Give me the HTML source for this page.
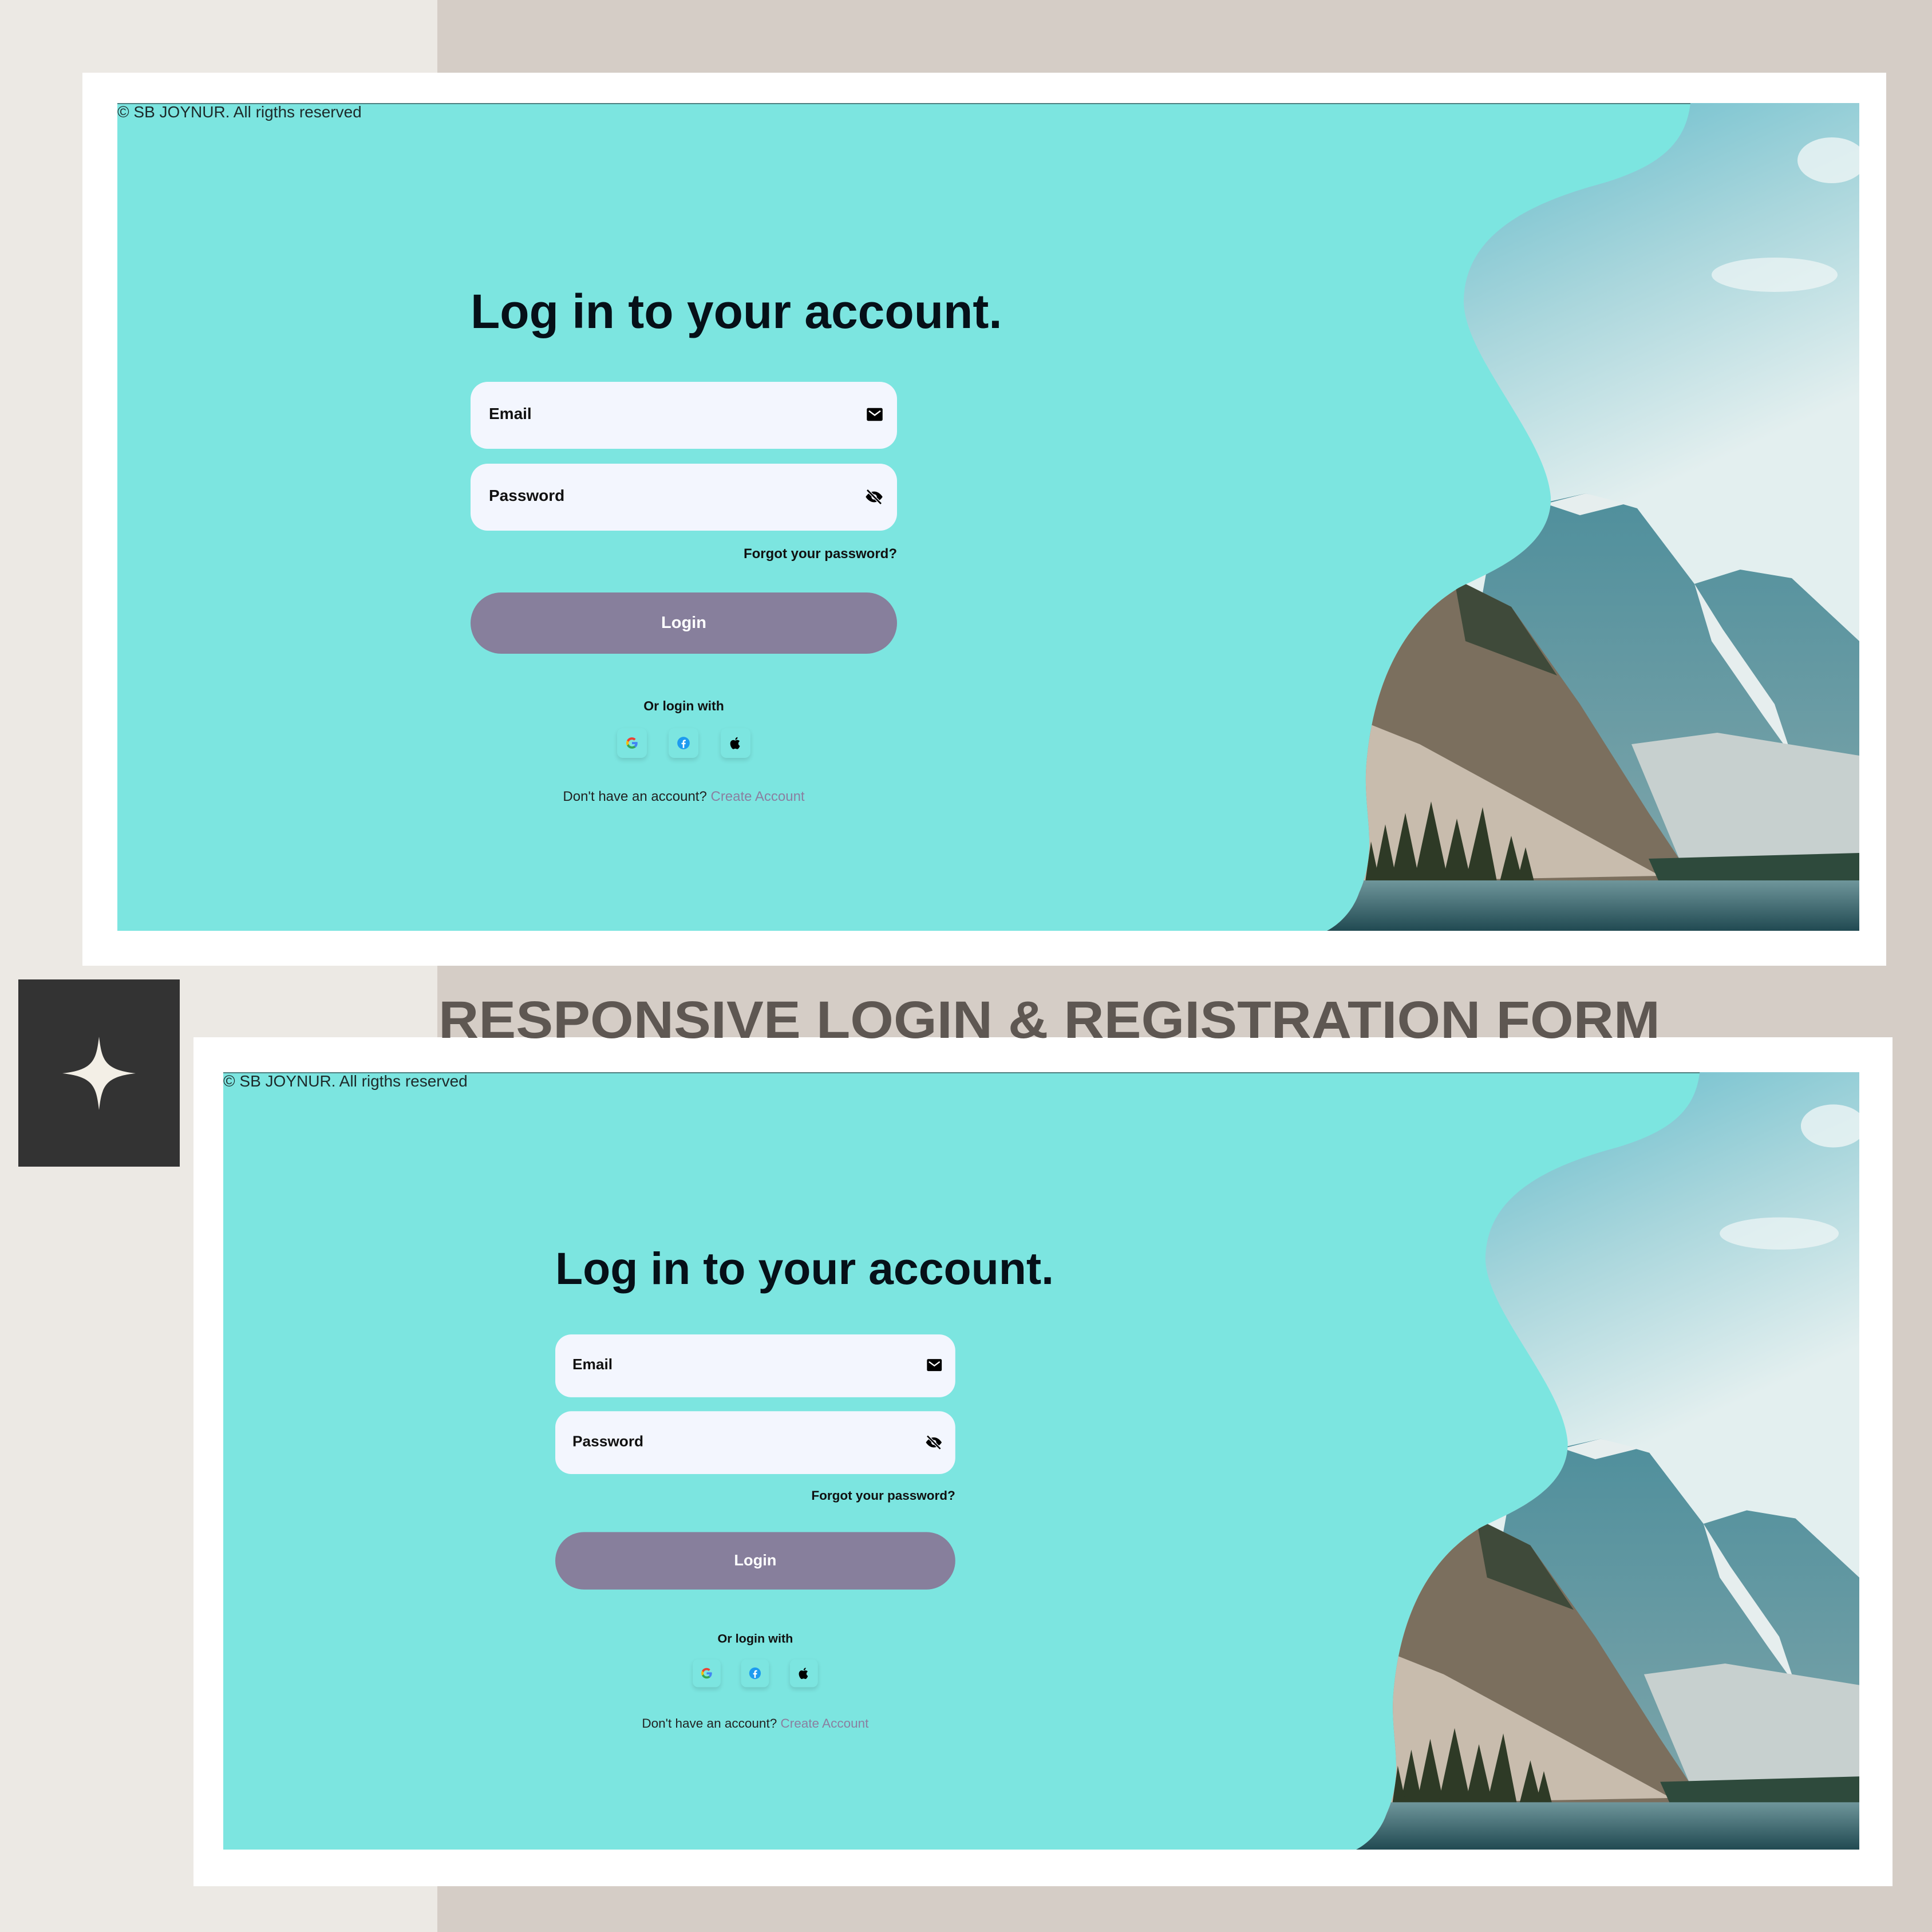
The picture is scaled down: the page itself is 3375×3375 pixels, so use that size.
<!DOCTYPE html>
<html><head><meta charset="utf-8">
<style>
*{margin:0;padding:0;box-sizing:border-box}
html,body{width:3375px;height:3375px;overflow:hidden}
body{position:relative;background:#d5cdc6;font-family:"Liberation Sans",sans-serif}
.abs{position:absolute}
.strip{left:0;top:0;width:764px;height:3375px;background:#ece9e4}
.card{background:#fff}
.teal{background:#7ce5e0;overflow:hidden;border-top:2px solid #4d7f80}
.foot{font-size:28px;color:#1d2a2a;white-space:nowrap}
.form{width:745px;height:1000px;transform-origin:0 0}
.title{position:absolute;left:0;top:36px;font-size:84px;font-weight:bold;color:#061018;white-space:nowrap;letter-spacing:0px}
.inp{position:absolute;left:0;width:745px;height:117px;background:#f3f6fe;border-radius:30px}
.inp span{position:absolute;left:32px;top:40px;font-size:28px;font-weight:bold;color:#111}
.inp svg{position:absolute;right:24px;top:42px}
.forgot{position:absolute;right:0;top:494px;font-size:24px;font-weight:bold;color:#111}
.btn{position:absolute;left:0;top:575px;width:745px;height:107px;border-radius:54px;background:#877f9c;color:#fff;font-size:29px;font-weight:bold;text-align:center;line-height:107px}
.or{position:absolute;left:0;width:745px;top:760px;text-align:center;font-size:23px;font-weight:bold;color:#111}
.soc{position:absolute;top:812px;width:52px;height:52px;border-radius:10px;background:#7ce5e0;box-shadow:0 4px 8px rgba(0,0,0,.12)}
.soc svg{position:absolute;left:13px;top:13px}
.dont{position:absolute;left:0;width:745px;top:918px;text-align:center;font-size:24px;color:#222}
.dont b{font-weight:normal;color:#8a7fa0}
</style></head><body>
<div class="abs strip"></div>

<!-- top card -->
<div class="abs card" style="left:144px;top:127px;width:3151px;height:1560px"></div>
<div class="abs teal" style="left:205px;top:180px;width:3043px;height:1446px"></div>
<svg class="abs" style="left:2300px;top:180px" width="948" height="1446" viewBox="2300 180 948 1446" preserveAspectRatio="none">
<defs>
<linearGradient id="sky" x1="0" y1="0" x2="0.3" y2="1"><stop offset="0" stop-color="#4fb3c6"/><stop offset="0.35" stop-color="#a9d6dc"/><stop offset="0.6" stop-color="#e3efef"/></linearGradient>
<linearGradient id="mt" x1="0" y1="0" x2="0" y2="1"><stop offset="0" stop-color="#4f8f9c"/><stop offset="1" stop-color="#7ea5aa"/></linearGradient>
<linearGradient id="wt" x1="0" y1="0" x2="0" y2="1"><stop offset="0" stop-color="#6f969b"/><stop offset="1" stop-color="#1f4850"/></linearGradient>
<clipPath id="cp"><path d="M2953,180 C2945,250 2900,290 2800,320 C2650,360 2560,420 2557,524 C2555,620 2700,760 2709,868 C2712,960 2600,1000 2548,1027 C2460,1080 2400,1180 2387,1334 C2380,1420 2410,1480 2374,1560 C2360,1600 2330,1620 2318,1626 L3248,1626 L3248,180 Z"/></clipPath>
</defs>
<g clip-path="url(#cp)">
<rect x="2300" y="180" width="948" height="1446" fill="url(#sky)"/>
<ellipse cx="3200" cy="280" rx="60" ry="40" fill="#eef5f5" opacity=".8"/>
<ellipse cx="3100" cy="480" rx="110" ry="30" fill="#f1f6f6" opacity=".7"/>
<path d="M2600,980 L2690,880 L2770,862 L2860,888 L2960,1020 L3040,995 L3130,1010 L3248,1120 L3248,1540 L2500,1540 Z" fill="url(#mt)"/>
<path d="M2700,880 L2770,862 L2840,880 L2760,900 Z" fill="#e6eeee"/>
<path d="M2960,1020 L3010,1100 L3100,1230 L3130,1320 L3080,1250 L2990,1120 Z" fill="#e6eeee"/>
<path d="M2850,1300 L3000,1280 L3248,1320 L3248,1540 L2950,1540 Z" fill="#c7d0cf"/>
<path d="M2540,1010 L2640,1060 L2760,1230 L2880,1420 L2960,1540 L2380,1540 L2380,1100 Z" fill="#7b6f5e"/>
<path d="M2540,1010 L2640,1060 L2720,1180 L2560,1120 Z" fill="#3f4a3a"/>
<path d="M2380,1260 L2480,1300 L2700,1420 L2900,1530 L2380,1540 Z" fill="#c8bcad"/>
<g fill="#2e3a26">
<path d="M2400,1540 L2420,1440 L2440,1540Z"/><path d="M2430,1540 L2455,1420 L2480,1540Z"/>
<path d="M2470,1540 L2500,1400 L2530,1540Z"/><path d="M2520,1540 L2545,1430 L2570,1540Z"/>
<path d="M2560,1540 L2590,1410 L2615,1540Z"/><path d="M2620,1540 L2640,1460 L2660,1540Z"/>
<path d="M2650,1540 L2665,1480 L2680,1540Z"/><path d="M2385,1540 L2395,1470 L2410,1540Z"/>
</g>
<path d="M2880,1500 L3248,1490 L3248,1545 L2900,1545Z" fill="#2e4a3c"/>
<rect x="2300" y="1538" width="948" height="90" fill="url(#wt)"/>
</g>
</svg>
<div class="abs foot" style="left:205px;top:180px">© SB JOYNUR. All rigths reserved</div>

<div class="abs form" style="left:822px;top:460px">
<div class="title">Log in to your account.</div>
<div class="inp" style="top:207px"><span>Email</span>
<svg width="30" height="30" viewBox="0 0 24 24"><rect x="1" y="3" width="22" height="18" rx="2" fill="#000"/><path d="M4 7l8 6 8-6" stroke="#fff" stroke-width="2" fill="none"/></svg></div>
<div class="inp" style="top:350px"><span>Password</span>
<svg width="32" height="32" viewBox="0 0 24 24"><path d="M1 12s4-7 11-7 11 7 11 7-4 7-11 7S1 12 1 12z" fill="#000"/><circle cx="12" cy="12" r="3.5" fill="#f3f6fe"/><path d="M3 3l18 18" stroke="#f3f6fe" stroke-width="4"/><path d="M3 3l18 18" stroke="#000" stroke-width="2"/></svg></div>
<div class="forgot">Forgot your password?</div>
<div class="btn">Login</div>
<div class="or">Or login with</div>
<div class="soc" style="left:256px"><svg width="26" height="26" viewBox="0 0 24 24"><path d="M21 12.2c0-.7-.1-1.3-.2-1.9H12v3.6h5a4.4 4.4 0 01-1.9 2.8v2.3h3A9 9 0 0021 12.2z" fill="#4285f4"/><path d="M12 21c2.5 0 4.6-.8 6.1-2.2l-3-2.3c-.8.6-1.9.9-3.1.9-2.4 0-4.4-1.6-5.1-3.8H3.8v2.4A9 9 0 0012 21z" fill="#34a853"/><path d="M6.9 13.6a5.4 5.4 0 010-3.4V7.8H3.8a9 9 0 000 8.2z" fill="#fbbc05"/><path d="M12 6.6c1.3 0 2.5.5 3.5 1.4l2.6-2.6A9 9 0 003.8 7.8l3.1 2.4C7.6 8.1 9.6 6.6 12 6.6z" fill="#ea4335"/></svg></div>
<div class="soc" style="left:346px"><svg width="26" height="26" viewBox="0 0 24 24"><circle cx="12" cy="12" r="10" fill="#1d9bf0"/><path d="M13.2 20v-6h2l.3-2.4h-2.3v-1.5c0-.7.2-1.1 1.2-1.1h1.2V6.9c-.2 0-1-.1-1.8-.1-1.8 0-3 1.1-3 3.1v1.7h-2V14h2v6z" fill="#fff"/></svg></div>
<div class="soc" style="left:437px"><svg width="26" height="26" viewBox="0 0 24 24"><path d="M16.5 12.6c0-2.4 2-3.5 2.1-3.6-1.1-1.7-2.9-1.9-3.5-1.9-1.5-.2-2.9.9-3.7.9s-1.9-.9-3.2-.8c-1.6 0-3.1 1-4 2.4-1.7 3-.4 7.4 1.2 9.8.8 1.2 1.8 2.5 3 2.4 1.2 0 1.7-.8 3.1-.8s1.9.8 3.2.8 2.1-1.2 2.9-2.4c.9-1.4 1.3-2.700 1.300-2.800-.100 0-2.500-1-2.500-3.900zM14.2 5.500c.6-.8 1.100-1.900 1-3-.9 0-2.100.6-2.700 1.400-.6.700-1.100 1.800-1 2.900 1 .1 2.100-.5 2.700-1.300z" fill="#000"/></svg></div>
<div class="dont">Don't have an account? <b>Create Account</b></div>
</div>

<!-- middle -->
<div class="abs" style="left:32px;top:1711px;width:282px;height:327px;background:#333"></div>
<svg class="abs" style="left:32px;top:1711px" width="282" height="327" viewBox="0 0 282 327"><path d="M141,100 C146,140 150,158 205,164 C150,170 146,188 141,228 C136,188 132,170 77,164 C132,158 136,140 141,100Z" fill="#f3efe6"/></svg>
<div class="abs card" style="left:338px;top:1812px;width:2968px;height:1483px"></div>
<svg class="abs" style="left:760px;top:1735px" width="2150" height="95" viewBox="0 0 2150 95"><text x="6" y="78" textLength="2134" lengthAdjust="spacingAndGlyphs" font-family="Liberation Sans" font-weight="bold" font-size="92" fill="#5e5752">RESPONSIVE LOGIN &amp; REGISTRATION FORM</text></svg>

<!-- bottom panel -->
<div class="abs teal" style="left:390px;top:1873px;width:2858px;height:1358px"></div>
<svg class="abs" style="left:2352px;top:1873px" width="896" height="1358" viewBox="2300 180 948 1446" preserveAspectRatio="none">
<g clip-path="url(#cp)">
<rect x="2300" y="180" width="948" height="1446" fill="url(#sky)"/>
<ellipse cx="3200" cy="280" rx="60" ry="40" fill="#eef5f5" opacity=".8"/>
<ellipse cx="3100" cy="480" rx="110" ry="30" fill="#f1f6f6" opacity=".7"/>
<path d="M2600,980 L2690,880 L2770,862 L2860,888 L2960,1020 L3040,995 L3130,1010 L3248,1120 L3248,1540 L2500,1540 Z" fill="url(#mt)"/>
<path d="M2700,880 L2770,862 L2840,880 L2760,900 Z" fill="#e6eeee"/>
<path d="M2960,1020 L3010,1100 L3100,1230 L3130,1320 L3080,1250 L2990,1120 Z" fill="#e6eeee"/>
<path d="M2850,1300 L3000,1280 L3248,1320 L3248,1540 L2950,1540 Z" fill="#c7d0cf"/>
<path d="M2540,1010 L2640,1060 L2760,1230 L2880,1420 L2960,1540 L2380,1540 L2380,1100 Z" fill="#7b6f5e"/>
<path d="M2540,1010 L2640,1060 L2720,1180 L2560,1120 Z" fill="#3f4a3a"/>
<path d="M2380,1260 L2480,1300 L2700,1420 L2900,1530 L2380,1540 Z" fill="#c8bcad"/>
<g fill="#2e3a26">
<path d="M2400,1540 L2420,1440 L2440,1540Z"/><path d="M2430,1540 L2455,1420 L2480,1540Z"/>
<path d="M2470,1540 L2500,1400 L2530,1540Z"/><path d="M2520,1540 L2545,1430 L2570,1540Z"/>
<path d="M2560,1540 L2590,1410 L2615,1540Z"/><path d="M2620,1540 L2640,1460 L2660,1540Z"/>
<path d="M2650,1540 L2665,1480 L2680,1540Z"/><path d="M2385,1540 L2395,1470 L2410,1540Z"/>
</g>
<path d="M2880,1500 L3248,1490 L3248,1545 L2900,1545Z" fill="#2e4a3c"/>
<rect x="2300" y="1538" width="948" height="90" fill="url(#wt)"/>
</g>
</svg>
<div class="abs foot" style="left:390px;top:1873px">© SB JOYNUR. All rigths reserved</div>

<div class="abs form" style="left:970px;top:2137px;transform:scale(0.938)">
<div class="title">Log in to your account.</div>
<div class="inp" style="top:207px"><span>Email</span>
<svg width="30" height="30" viewBox="0 0 24 24"><rect x="1" y="3" width="22" height="18" rx="2" fill="#000"/><path d="M4 7l8 6 8-6" stroke="#fff" stroke-width="2" fill="none"/></svg></div>
<div class="inp" style="top:350px"><span>Password</span>
<svg width="32" height="32" viewBox="0 0 24 24"><path d="M1 12s4-7 11-7 11 7 11 7-4 7-11 7S1 12 1 12z" fill="#000"/><circle cx="12" cy="12" r="3.5" fill="#f3f6fe"/><path d="M3 3l18 18" stroke="#f3f6fe" stroke-width="4"/><path d="M3 3l18 18" stroke="#000" stroke-width="2"/></svg></div>
<div class="forgot">Forgot your password?</div>
<div class="btn">Login</div>
<div class="or">Or login with</div>
<div class="soc" style="left:256px"><svg width="26" height="26" viewBox="0 0 24 24"><path d="M21 12.2c0-.7-.1-1.3-.2-1.9H12v3.6h5a4.4 4.4 0 01-1.9 2.8v2.3h3A9 9 0 0021 12.2z" fill="#4285f4"/><path d="M12 21c2.5 0 4.6-.8 6.1-2.2l-3-2.3c-.8.6-1.9.9-3.1.9-2.4 0-4.4-1.6-5.1-3.8H3.8v2.4A9 9 0 0012 21z" fill="#34a853"/><path d="M6.9 13.6a5.4 5.4 0 010-3.4V7.8H3.8a9 9 0 000 8.2z" fill="#fbbc05"/><path d="M12 6.6c1.3 0 2.5.5 3.5 1.4l2.6-2.6A9 9 0 003.8 7.8l3.1 2.4C7.6 8.1 9.6 6.6 12 6.6z" fill="#ea4335"/></svg></div>
<div class="soc" style="left:346px"><svg width="26" height="26" viewBox="0 0 24 24"><circle cx="12" cy="12" r="10" fill="#1d9bf0"/><path d="M13.2 20v-6h2l.3-2.4h-2.3v-1.5c0-.7.2-1.1 1.2-1.1h1.2V6.9c-.2 0-1-.1-1.8-.1-1.8 0-3 1.1-3 3.1v1.7h-2V14h2v6z" fill="#fff"/></svg></div>
<div class="soc" style="left:437px"><svg width="26" height="26" viewBox="0 0 24 24"><path d="M16.5 12.6c0-2.4 2-3.5 2.1-3.6-1.1-1.7-2.9-1.9-3.5-1.9-1.5-.2-2.9.9-3.700.9s-1.900-.9-3.200-.8c-1.600 0-3.100 1-4 2.400-1.700 3-.4 7.400 1.200 9.800.8 1.200 1.800 2.500 3 2.400 1.200 0 1.700-.8 3.100-.8s1.900.8 3.200.8 2.100-1.200 2.900-2.400c.9-1.400 1.300-2.700 1.300-2.800-.1 0-2.500-1-2.500-3.900zM14.2 5.5c.6-.8 1.1-1.9 1-3-.9 0-2.1.6-2.7 1.4-.6.7-1.1 1.8-1 2.9 1 .1 2.1-.5 2.7-1.3z" fill="#000"/></svg></div>
<div class="dont">Don't have an account? <b>Create Account</b></div>
</div>
</body></html>
